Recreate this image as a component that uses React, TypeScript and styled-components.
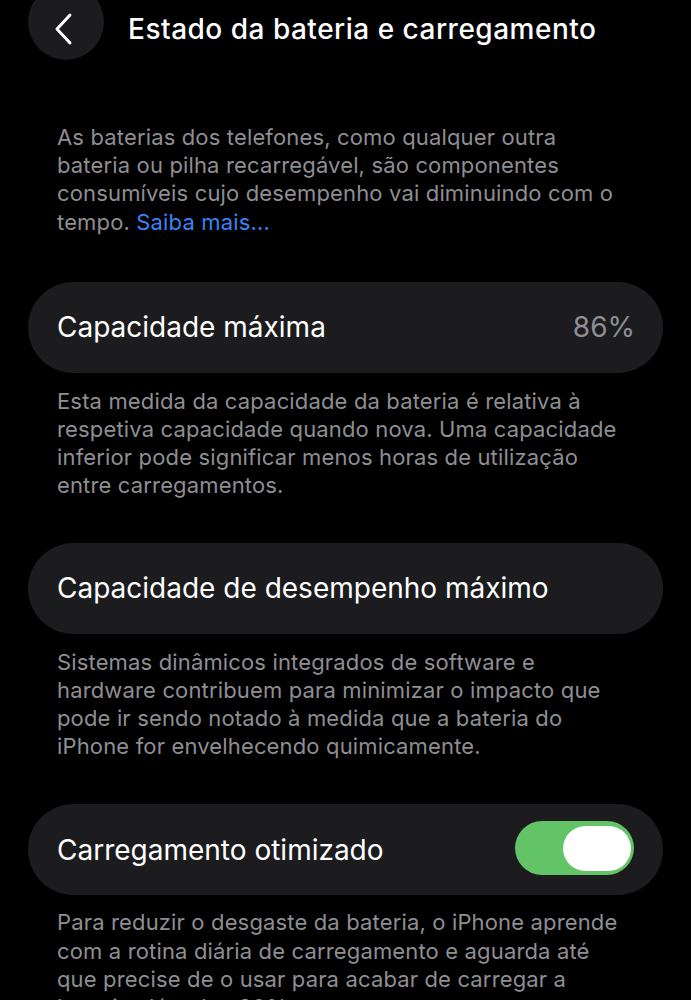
import React from "react";
import styled, { createGlobalStyle } from "styled-components";

const Global = createGlobalStyle`
  html, body { margin: 0; padding: 0; background: #000; }
  body { font-family: Inter, Roboto, "Liberation Sans", sans-serif; -webkit-font-smoothing: antialiased; overflow: hidden; }
`;

const Page = styled.div`
  width: 691px;
  height: 1000px;
  background: #000;
  overflow: hidden;
  display: flex;
  flex-direction: column;
  & > * { flex-shrink: 0; }
`;

const Header = styled.div`
  display: flex;
  align-items: center;
  gap: 24px;
  margin-top: -16px;
  padding-left: 28px;
  height: 76px;
`;

const BackButton = styled.button`
  width: 76px;
  height: 76px;
  border-radius: 50%;
  border: none;
  background: #1c1c1e;
  display: flex;
  align-items: center;
  justify-content: center;
  padding: 14px 6px 0 0;
  flex-shrink: 0;
`;

const Title = styled.h1`
  margin: 0;
  margin-top: 14px;
  color: #fff;
  font-size: 28px;
  font-weight: 500;
  letter-spacing: 0.5px;
`;

const Note = styled.p<{ $top: number }>`
  margin: ${(p) => p.$top}px 0 0;
  padding: 0 20px 0 57px;
  color: #8e8e93;
  font-size: 22px;
  line-height: 28.2px;
  font-weight: 400;
  letter-spacing: 0.15px;
  white-space: nowrap;
`;

const Link = styled.span`
  color: #3b82f6;
`;

const Cell = styled.div<{ $top: number }>`
  margin: ${(p) => p.$top}px 28px 0;
  height: 91px;
  border-radius: 46px;
  background: #1c1c1e;
  display: flex;
  align-items: center;
  justify-content: space-between;
  padding: 0 28px 0 29px;
`;

const Label = styled.span`
  color: #fff;
  font-size: 28px;
  font-weight: 400;
`;

const Value = styled.span`
  color: #8e8e93;
  font-size: 28px;
`;

const Toggle = styled.div<{ $on: boolean }>`
  width: 119px;
  height: 54px;
  border-radius: 27px;
  background: ${(p) => (p.$on ? "#62c466" : "#39393d")};
  display: flex;
  align-items: center;
  justify-content: ${(p) => (p.$on ? "flex-end" : "flex-start")};
  padding: 0 3px;
  box-sizing: border-box;
  margin-right: 1px;
  margin-top: -3px;
  flex-shrink: 0;
`;

const Thumb = styled.div`
  width: 68px;
  height: 45px;
  border-radius: 23px;
  background: #fff;
`;

export default function App() {
  return (
    <Page>
      <Global />
      <Header>
        <BackButton aria-label="Voltar">
          <svg width="22" height="34" viewBox="0 0 22 34" fill="none">
            <path d="M18 3 L5 17 L18 31" stroke="#fff" strokeWidth="3" strokeLinecap="round" strokeLinejoin="round" />
          </svg>
        </BackButton>
        <Title>Estado da bateria e carregamento</Title>
      </Header>

      <Note $top={63}>
        As baterias dos telefones, como qualquer outra
        <br />
        bateria ou pilha recarregável, são componentes
        <br />
        consumíveis cujo desempenho vai diminuindo com o
        <br />
        tempo. <Link>Saiba mais...</Link>
      </Note>

      <Cell $top={46}>
        <Label>Capacidade máxima</Label>
        <Value>86%</Value>
      </Cell>

      <Note $top={14}>
        Esta medida da capacidade da bateria é relativa à
        <br />
        respetiva capacidade quando nova. Uma capacidade
        <br />
        inferior pode significar menos horas de utilização
        <br />
        entre carregamentos.
      </Note>

      <Cell $top={43}>
        <Label>Capacidade de desempenho máximo</Label>
      </Cell>

      <Note $top={14}>
        Sistemas dinâmicos integrados de software e
        <br />
        hardware contribuem para minimizar o impacto que
        <br />
        pode ir sendo notado à medida que a bateria do
        <br />
        iPhone for envelhecendo quimicamente.
      </Note>

      <Cell $top={44}>
        <Label>Carregamento otimizado</Label>
        <Toggle $on={true}>
          <Thumb />
        </Toggle>
      </Cell>

      <Note $top={13}>
        Para reduzir o desgaste da bateria, o iPhone aprende
        <br />
        com a rotina diária de carregamento e aguarda até
        <br />
        que precise de o usar para acabar de carregar a
        <br />
        bateria além dos 80%.
      </Note>
    </Page>
  );
}
